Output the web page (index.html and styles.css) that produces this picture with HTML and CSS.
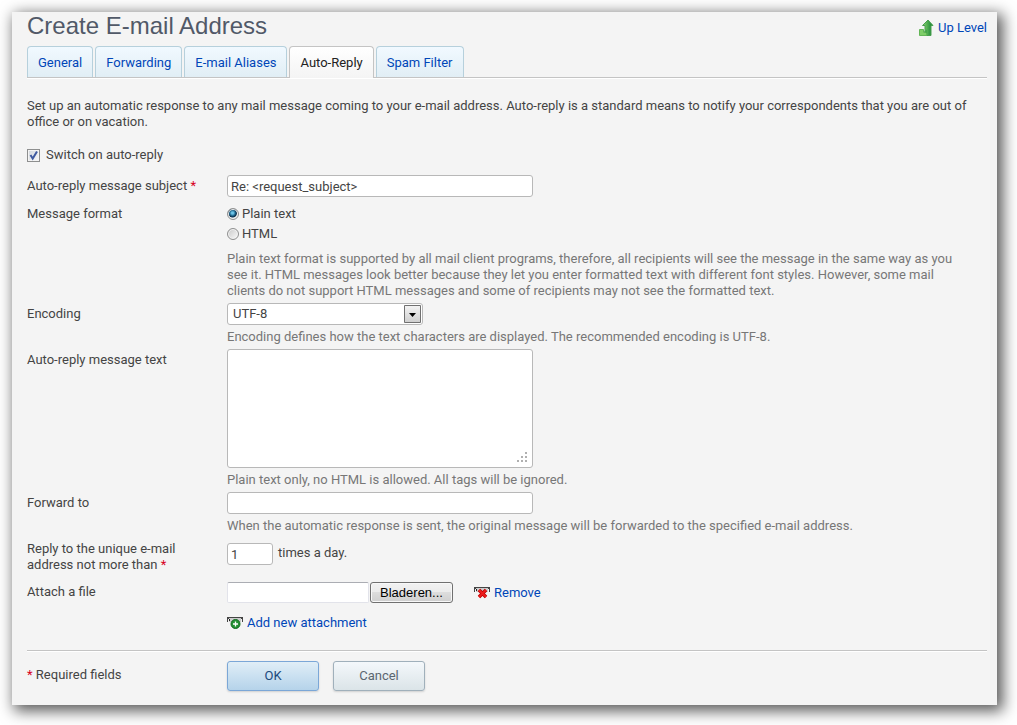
FILE: index.html
```html
<!DOCTYPE html>
<html lang="en">
<head>
  <meta charset="UTF-8" />
  <meta name="viewport" content="width=device-width, initial-scale=1.0"/>
  <title>Create E-mail Address</title>
  <link rel="stylesheet" href="styles.css">
</head>
<body>

<main class="panel">
  <header>
    <h1>Create E-mail Address</h1>
    <a class="icon-link" href="#up">
      <svg width="16" height="18" viewBox="0 0 16 18">
        <defs>
          <linearGradient id="arrow" x1="0" x2="1"><stop offset="0" stop-color="#8ed873"/><stop offset="1" stop-color="#0c7a2c"/></linearGradient>
        </defs>
        <path d="M7 16.500V6.500H4.500L10 1l5 5.500h-2v10z" fill="url(#arrow)" stroke="#4a9f50"/>
        <path d="M1.500 10.500h4v3h3v3h-7z" fill="#7fce68" stroke="#62b556"/>
        <path d="M6 12.500l3-2v4z" fill="#46a64a"/>
      </svg>
      <span>Up Level</span>
    </a>
  </header>

  <nav class="tabs">
    <a href="#general">General</a>
    <a href="#forwarding">Forwarding</a>
    <a href="#aliases">E-mail Aliases</a>
    <a href="#auto-reply" class="active">Auto-Reply</a>
    <a href="#spam">Spam Filter</a>
  </nav>

  <p class="intro">Set up an automatic response to any mail message coming to your e-mail address. Auto-reply is a standard means to notify your correspondents that you are out of office or on vacation.</p>

  <form>
    <div class="switch">
      <span class="check">
        <input type="checkbox" id="switch" checked>
        <svg width="13" height="13" viewBox="0 0 13 13"><path d="M3.500 6l2.200 3.500L10 2.500" fill="none" stroke="#3f5aa0" stroke-width="2"/></svg>
      </span>
      <label for="switch">Switch on auto-reply</label>
    </div>

    <div class="row spaced">
      <label class="name" for="subject">Auto-reply message subject <span class="req">*</span></label>
      <div><input class="field" type="text" id="subject" value="Re: &lt;request_subject&gt;"></div>
    </div>

    <div class="row" role="radiogroup" aria-labelledby="format">
      <span class="name" id="format">Message format</span>
      <div class="formats">
        <div class="radio"><input type="radio" name="format" id="plain" checked><label for="plain">Plain text</label></div>
        <div class="radio"><input type="radio" name="format" id="html"><label for="html">HTML</label></div>
        <p class="hint format-hint">Plain text format is supported by all mail client programs, therefore, all recipients will see the message in the same way as you see it. HTML messages look better because they let you enter formatted text with different font styles. However, some mail clients do not support HTML messages and some of recipients may not see the formatted text.</p>
      </div>
    </div>

    <div class="row">
      <label class="name" for="encoding">Encoding</label>
      <div>
        <div class="select">
          <select id="encoding"><option>UTF-8</option></select>
          <svg width="17" height="18" viewBox="0 0 17 18">
            <defs>
              <linearGradient id="drop" x2="0" y2="1"><stop offset="0" stop-color="#f4f4f4"/><stop offset="1" stop-color="#cecece"/></linearGradient>
            </defs>
            <path d="M.5.5h16v17H.5z" fill="url(#drop)" stroke="#707070"/>
            <path d="M5 8h7l-3.500 4z"/>
          </svg>
        </div>
        <p class="hint">Encoding defines how the text characters are displayed. The recommended encoding is UTF-8.</p>
      </div>
    </div>

    <div class="row">
      <label class="name" for="message">Auto-reply message text</label>
      <div>
        <div class="message">
          <textarea class="field" id="message"></textarea>
          <svg width="10" height="10" viewBox="0 0 10 10" fill="#b0b0b0"><path d="M8 0h2v2H8zM4 4h2v2H4zM8 4h2v2H8zM0 8h2v2H0zM4 8h2v2H4zM8 8h2v2H8z"/></svg>
        </div>
        <p class="hint">Plain text only, no HTML is allowed. All tags will be ignored.</p>
      </div>
    </div>

    <div class="row spaced">
      <label class="name" for="forward">Forward to</label>
      <div>
        <input class="field" type="text" id="forward">
        <p class="hint">When the automatic response is sent, the original message will be forwarded to the specified e-mail address.</p>
      </div>
    </div>

    <div class="row reply">
      <label class="name" for="times">Reply to the unique e-mail address not more than <span class="req">*</span></label>
      <div class="times"><input class="field" type="text" id="times" value="1"><span>times a day.</span></div>
    </div>

    <div class="row">
      <label class="name attach-name" for="file">Attach a file</label>
      <div>
        <div class="attach">
          <input class="file" type="text" id="file" readonly>
          <button class="browse" type="button">Bladeren...</button>
          <a class="icon-link" href="#remove">
            <svg width="16" height="12" viewBox="0 0 16 12">
              <path d="M0 0h16v5h-1V2H1v3H0z" fill="#444"/>
              <path d="M2 1h12v4H2z" fill="#ccc"/>
              <path d="M2 2h1v2H2z" fill="#222"/>
              <path d="M5 3l7 7M12 3l-7 7" stroke="#b80000" stroke-width="3.500"/>
              <path d="M5 3l7 7M12 3l-7 7" stroke="#ee1c1c" stroke-width="2"/>
            </svg>
            <span>Remove</span>
          </a>
        </div>
        <a class="icon-link add" href="#add">
          <svg width="16" height="12" viewBox="0 0 16 12">
            <path d="M0 0h16v5h-1V2H1v3H0z" fill="#444"/>
            <path d="M2 1h12v4H2z" fill="#ccc"/>
            <path d="M2 2h1v2H2z" fill="#222"/>
            <circle cx="8.500" cy="7" r="4.500" fill="#249234" stroke="#116a20"/>
            <path d="M6 7h5M8.500 4.500v5" stroke="#fff" stroke-width="1.300"/>
          </svg>
          <span>Add new attachment</span>
        </a>
      </div>
    </div>

    <div class="row actions">
      <span class="required"><span class="req">*</span> Required fields</span>
      <div class="buttons">
        <button class="btn ok" type="submit">OK</button>
        <button class="btn" type="button">Cancel</button>
      </div>
    </div>
  </form>
</main>

</body>
</html>
```
FILE: styles.css
```css
* {
  box-sizing: border-box;
}

body {
  margin: 0;
  background: #fff;
  color: #444;
  font: 13px/16px Roboto, "Open Sans", sans-serif;
}

.panel {
  margin: 12px 20px 20px 12px;
  padding: 0 10px 14px 15px;
  background: #f4f4f4;
  box-shadow: 4px 4px 14px 2px rgba(0,0,0,0.65);
}

header {
  display: flex;
  justify-content: space-between;
  align-items: flex-start;
}

h1 {
  margin: 0;
  color: #515968;
  font: 24px/28px "Liberation Sans", Arial, sans-serif;
}

a {
  color: #0046b8;
  text-decoration: none;
}

p {
  margin: 0;
}

.icon-link {
  display: flex;
  align-items: center;
  gap: 4px;
}

header .icon-link {
  margin-top: 7px;
}

/* Tabs */
.tabs {
  display: flex;
  gap: 2px;
  margin-top: 6px;
  border-bottom: 1px solid #c4c4c4;
  box-shadow: 0 1px 0 #fff;
}

.tabs a {
  height: 31px;
  padding: 0 10px;
  border: 1px solid #b6d0dc;
  border-bottom: 0;
  border-radius: 4px 4px 0 0;
  background: linear-gradient(#f1f9ff, #e1eef5);
  line-height: 31px;
}

.tabs .active {
  height: 32px;
  margin-bottom: -1px;
  border-color: #c4c4c4;
  background: linear-gradient(#fff, #f4f4f4);
  color: #222;
}

.intro {
  margin-top: 20px;
}

/* Form rows */
.switch {
  display: flex;
  align-items: center;
  gap: 6px;
  margin: 17px 0 12px;
}

.check {
  position: relative;
  height: 13px;
}

.check svg {
  position: absolute;
  left: 0;
  top: 0;
  pointer-events: none;
}

.check input {
  display: block;
  appearance: none;
  width: 13px;
  height: 13px;
  margin: 0;
  border: 1px solid #8e8f8f;
  background: linear-gradient(135deg, #cfd5dc, #fafafa);
  box-shadow: inset 0 0 0 1px #f4f4f4;
}

.row {
  display: grid;
  grid-template-columns: 200px 1fr;
  margin-bottom: 4px;
}

.spaced {
  margin-bottom: 6px;
}

.name {
  padding: 3px 20px 0 0;
}

.req {
  color: #d8001d;
}

.hint {
  margin-top: 4px;
  color: #777;
}

.formats {
  padding-top: 1px;
}

.format-hint {
  margin-top: 7px;
  padding-right: 18px;
}

.field {
  display: block;
  width: 306px;
  height: 22px;
  padding: 0 3px;
  border: 1px solid #b8b8b8;
  border-radius: 3px;
  background: #fff;
  color: #444;
  font: inherit;
}

.radio {
  display: flex;
  align-items: center;
  gap: 3px;
  height: 20px;
}

.radio input {
  appearance: none;
  width: 12px;
  height: 12px;
  margin: 0;
  border: 1px solid #8e8f8f;
  border-radius: 50%;
  background: linear-gradient(135deg, #c8c8c8, #fafafa);
  box-shadow: inset 0 0 0 1px #f4f4f4;
}

.radio input:checked {
  background: radial-gradient(circle at 45% 40%, #6cc4e8 0 1px, #155a80 3px, #0b2c48 4px, #e4e8ea 5px);
}

.select {
  position: relative;
  width: 196px;
}

.select select {
  display: block;
  appearance: none;
  width: 100%;
  height: 22px;
  padding: 0 5px;
  border: 1px solid #b8b8b8;
  border-radius: 3px;
  background: #fff;
  color: #444;
  font: inherit;
}

.select svg {
  position: absolute;
  right: 2px;
  top: 2px;
  pointer-events: none;
}

.message {
  position: relative;
  width: 306px;
}

.message textarea {
  height: 119px;
  resize: none;
}

.message svg {
  position: absolute;
  right: 6px;
  bottom: 6px;
  pointer-events: none;
}

.reply {
  margin-bottom: 9px;
}

.reply .name {
  padding: 1px 40px 0 0;
}

.times {
  display: flex;
  gap: 5px;
  padding-top: 3px;
}

.times .field {
  width: 46px;
}

.times span {
  line-height: 20px;
}

.attach {
  display: flex;
  align-items: center;
}

.attach-name {
  padding-top: 2px;
}

.file {
  width: 142px;
  height: 21px;
  border: 1px solid #e2e3ea;
  border-top-color: #abadb3;
  border-radius: 2px;
  background: #fff;
}

.browse {
  width: 83px;
  height: 21px;
  margin: 0 21px 0 1px;
  padding: 0;
  border: 1px solid #707070;
  border-radius: 3px;
  background: linear-gradient(#f2f2f2, #ebebeb 50%, #dddddd 50%, #cfcfcf);
  box-shadow: inset 0 0 0 1px #f8f8f8;
  color: #000;
  font: 13px/16px "Liberation Sans", Arial, sans-serif;
}

.add {
  width: max-content;
  margin-top: 12px;
}

/* Bottom bar */
.actions {
  margin: 19px 0 0;
  padding-top: 10px;
  border-top: 1px solid #c4c4c4;
  box-shadow: inset 0 1px 0 #fff;
}

.required {
  padding-top: 6px;
}

.buttons {
  display: flex;
  gap: 14px;
}

.btn {
  width: 92px;
  height: 30px;
  border: 1px solid #a0b0bb;
  border-radius: 3px;
  background: linear-gradient(#f4f8fb, #dbe4e8);
  box-shadow: 0 1px 2px rgba(0,0,0,0.15);
  color: #5b6670;
  font: inherit;
}

.ok {
  border-color: #7ba7d7;
  background: linear-gradient(#e0eef7, #b5d3ea);
  color: #1c4a7c;
}
```
